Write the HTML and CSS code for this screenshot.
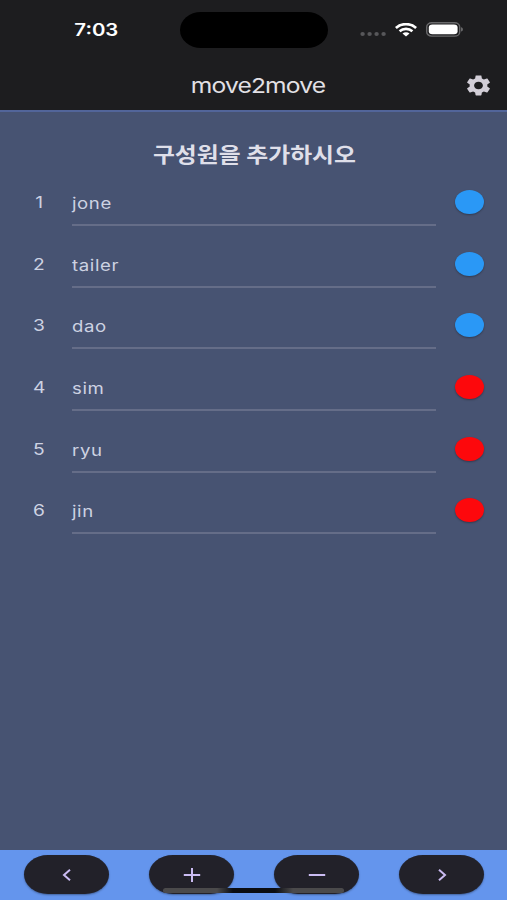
FILE: index.html
```
<!DOCTYPE html>
<html lang="ko">

<head>
    <meta charset="UTF-8">
    <meta name="viewport" content="width=device-width, initial-scale=1.0">
    <title>move2move</title>
    <link rel="stylesheet" href="styles.css">
</head>

<body>
    <div class="app">
        <header class="top">
            <div class="status-bar">
                <div class="time"><span class="wide">7:03</span></div>
                <div class="island"></div>
                <div class="status-icons">
                    <svg class="dots" width="26" height="6" viewBox="0 0 26 6" fill="#57575a">
                        <ellipse cx="2.6" cy="3" rx="2.2" ry="2" />
                        <ellipse cx="9.6" cy="3" rx="2.2" ry="2" />
                        <ellipse cx="16.6" cy="3" rx="2.2" ry="2" />
                        <ellipse cx="23.6" cy="3" rx="2.2" ry="2" />
                    </svg>
                    <svg class="wifi" width="22" height="14" viewBox="0 0 22 14" fill="none" stroke="#fff" stroke-width="2.7">
                        <path d="M0.9 4.9C6.5 -0.1 15.5 -0.1 21.1 4.9" />
                        <path d="M4.6 8.2C8.2 5.1 13.8 5.1 17.4 8.2" />
                        <path d="M7.5 10.5C9.5 8.7 12.5 8.7 14.5 10.5L11 13.6Z" fill="#fff" stroke="none" />
                    </svg>
                    <svg class="battery" width="38" height="15" viewBox="0 0 38 15">
                        <rect x="0.7" y="0.7" width="33" height="13.4" rx="5" ry="4.2" fill="none" stroke="#68686a" stroke-width="1.4" />
                        <rect x="2.8" y="2.6" width="28.8" height="9.6" rx="3.6" ry="3" fill="#fff" />
                        <path d="M35.2 5.2C37.3 5.8 37.3 9 35.2 9.6Z" fill="#7a7a7c" />
                    </svg>
                </div>
            </div>
            <div class="app-bar">
                <h1><span class="wide">move2move</span></h1>
                <svg class="settings" width="27" height="23" viewBox="1 1 22 22" preserveAspectRatio="none" fill="#d2ced7">
                    <path d="M19.14 12.94c.04-.3.06-.61.06-.94 0-.32-.02-.64-.07-.94l2.03-1.58c.18-.14.23-.41.12-.61l-1.92-3.32c-.12-.22-.37-.29-.59-.22l-2.39.96c-.5-.38-1.03-.7-1.62-.94l-.36-2.54c-.04-.24-.24-.41-.48-.41h-3.84c-.24 0-.43.17-.47.41l-.36 2.54c-.59.24-1.13.57-1.62.94l-2.39-.96c-.22-.08-.47 0-.59.22L2.74 8.87c-.12.21-.08.47.12.61l2.03 1.58c-.05.3-.09.63-.09.94s.02.64.07.94l-2.03 1.58c-.18.14-.23.41-.12.61l1.92 3.32c.12.22.37.29.59.22l2.39-.96c.5.38 1.03.7 1.62.94l.36 2.54c.05.24.24.41.48.41h3.84c.24 0 .44-.17.47-.41l.36-2.54c.59-.24 1.13-.56 1.62-.94l2.39.96c.22.08.47 0 .59-.22l1.92-3.32c.12-.22.07-.47-.12-.61l-2.01-1.58zM12 15.6c-1.98 0-3.6-1.62-3.6-3.6s1.62-3.6 3.6-3.6 3.6 1.62 3.6 3.6-1.62 3.6-3.6 3.6z" />
                </svg>
            </div>
        </header>

        <main class="members">
            <h2><span class="wide">구성원을 추가하시오</span></h2>
            <ul class="member-list">
                <li>
                    <div class="number"><span class="wide">1</span></div>
                    <div class="name"><span class="wide">jone</span></div>
                    <div class="team blue"></div>
                </li>
                <li>
                    <div class="number"><span class="wide">2</span></div>
                    <div class="name"><span class="wide">tailer</span></div>
                    <div class="team blue"></div>
                </li>
                <li>
                    <div class="number"><span class="wide">3</span></div>
                    <div class="name"><span class="wide">dao</span></div>
                    <div class="team blue"></div>
                </li>
                <li>
                    <div class="number"><span class="wide">4</span></div>
                    <div class="name"><span class="wide">sim</span></div>
                    <div class="team red"></div>
                </li>
                <li>
                    <div class="number"><span class="wide">5</span></div>
                    <div class="name"><span class="wide">ryu</span></div>
                    <div class="team red"></div>
                </li>
                <li>
                    <div class="number"><span class="wide">6</span></div>
                    <div class="name"><span class="wide">jin</span></div>
                    <div class="team red"></div>
                </li>
            </ul>
        </main>

        <footer class="bottom-bar">
            <button type="button" aria-label="Previous">
                <svg width="20" height="16" viewBox="0 0 20 16"><path d="M13 2.7L7 8L13 13.3" /></svg>
            </button>
            <button type="button" aria-label="Add">
                <svg width="20" height="16" viewBox="0 0 20 16"><path d="M1.8 8H18.2M10 1V15" /></svg>
            </button>
            <button type="button" aria-label="Remove">
                <svg width="20" height="16" viewBox="0 0 20 16"><path d="M1.8 8H18.2" /></svg>
            </button>
            <button type="button" aria-label="Next">
                <svg width="20" height="16" viewBox="0 0 20 16"><path d="M7 2.7L13 8L7 13.3" /></svg>
            </button>
            <div class="home-indicator"></div>
        </footer>
    </div>
</body>

</html>
```
FILE: styles.css
```
* {
    box-sizing: border-box;
}

body {
    margin: 0;
    font-family: Inter, "Noto Sans CJK KR", sans-serif;
    background-color: #475372;
}

.app {
    display: flex;
    flex-direction: column;
    width: 507px;
    height: 900px;
    overflow: hidden;
}

.wide {
    display: inline-block;
    transform: scaleX(1.2);
    transform-origin: center;
}

/* status bar and title */
.top {
    height: 112px;
    background-color: #1d1d1f;
    border-bottom: 2px solid #52659a;
}

.status-bar {
    display: grid;
    grid-template-columns: 180px 148px 1fr;
    align-items: center;
    height: 59px;
}

.time {
    padding-left: 12px;
    text-align: center;
    font-size: 17px;
    font-weight: 600;
    line-height: 20px;
    color: #fff;
}

.island {
    height: 36px;
    border-radius: 21px / 18px;
    background-color: #000;
}

.status-icons {
    display: flex;
    align-items: center;
    padding-left: 32px;
}

.dots {
    margin-top: 8px;
}

.wifi {
    margin-left: 9px;
}

.battery {
    margin-left: 9px;
}

.app-bar {
    display: grid;
    grid-template-columns: 40px 1fr 40px;
    align-items: center;
    height: 52px;
    padding: 0 0 0 9px;
}

h1 {
    grid-column: 2;
    margin: 2px 0 0;
    text-align: center;
    font-size: 20.5px;
    font-weight: 400;
    line-height: 26px;
    letter-spacing: -0.7px;
    color: #e2e0e5;
}

.settings {
    margin-left: -2px;
}

/* members */
.members {
    flex: 1;
    padding: 29px 23px 0 24px;
}

h2 {
    margin: 0;
    text-align: center;
    font-size: 21px;
    font-weight: 700;
    line-height: 28px;
    color: #dfdfe9;
}

h2 .wide {
    transform: scaleX(1.135);
}

.member-list {
    margin: 0;
    padding: 0;
    list-style: none;
}

.member-list li {
    display: grid;
    grid-template-columns: 30px 364px 29px;
    column-gap: 18px;
    height: 61.7px;
    padding-top: 11px;
}

.number,
.name {
    font-size: 16px;
    line-height: 22px;
    color: #cdd2e2;
}

.number {
    padding-top: 11px;
    text-align: center;
}

.name {
    height: 46px;
    padding-top: 13px;
    font-size: 15.5px;
    letter-spacing: 0.5px;
    border-bottom: 2px solid #656d88;
}

.name .wide {
    transform-origin: left;
}

.team {
    height: 24px;
    margin: 10px -0.5px 0 0.5px;
    border-radius: 50%;
    box-shadow: 0 1px 2px rgba(0, 0, 0, 0.3);
}

.blue {
    background-color: #2a98f6;
}

.red {
    background-color: #fd080c;
}

/* bottom buttons */
.bottom-bar {
    position: relative;
    display: flex;
    justify-content: space-between;
    height: 50px;
    padding: 5px 23px 0 24px;
    background-color: #6495ed;
}

.bottom-bar button {
    display: flex;
    justify-content: center;
    align-items: center;
    width: 85px;
    height: 39px;
    padding: 0;
    border: none;
    border-radius: 24px / 19.5px;
    background-color: #222129;
    box-shadow: 0 1px 2px rgba(0, 0, 0, 0.35);
}

.bottom-bar svg {
    fill: none;
    stroke: #cbbcf2;
    stroke-width: 2;
}

.home-indicator {
    position: absolute;
    left: 163px;
    bottom: 7px;
    width: 181px;
    height: 5px;
    border-radius: 3px;
    background: linear-gradient(to right, #4b4a4b 0, #4b4a4b 54px, #0b0d12 70px, #0b0d12 112px, #4b4a4b 130px);
}
```
